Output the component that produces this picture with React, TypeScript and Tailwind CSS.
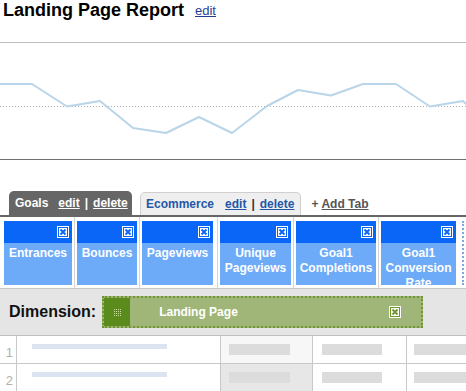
import React from 'react'

const FONT = "font-['Liberation_Sans',Arial,sans-serif]"

const METRICS = [
  { label: ['Entrances'], cell: 'w-[75px] pl-[4px] pr-[2px]' },
  { label: ['Bounces'], cell: 'w-[65px] px-[2px]' },
  { label: ['Pageviews'], cell: 'w-[78px] pl-[2px] pr-[4px]' },
  { label: ['Unique', 'Pageviews'], cell: 'w-[76px] pl-[2px] pr-[2px]' },
  { label: ['Goal1', 'Completions'], cell: 'w-[85px] px-[2px]' },
  { label: ['Goal1', 'Conversion', 'Rate'], cell: 'w-[79px] px-[2px] border-r-0' },
]

const POINTS = [
  [0, 44], [32, 44], [67, 66.5], [100, 61], [133, 88], [166, 93], [199, 77], [232, 93],
  [267, 66], [298, 50], [331, 55.5], [363, 44], [396, 44], [430, 66.5], [463, 61], [466, 64],
]

function CloseBox({ color }: { color: string }) {
  return (
    <svg width="12" height="12" viewBox="0 0 12 12">
      <rect x="0.5" y="0.5" width="11" height="11" fill="#fff" stroke="#fff" />
      <rect x="1.5" y="1.5" width="9" height="9" fill="#fff" stroke={color} strokeWidth="1" />
      <path d="M3.5 3.5 L8.5 8.5 M8.5 3.5 L3.5 8.5" stroke={color} strokeWidth="2" />
    </svg>
  )
}

function Chart() {
  return (
    <svg width="466" height="120" viewBox="0 0 466 120" className="block">
      <line x1="0" y1="2.5" x2="466" y2="2.5" stroke="#bdbdbd" />
      <line x1="0" y1="66.5" x2="466" y2="66.5" stroke="#b0b0b0" strokeDasharray="1 2" />
      <polyline
        points={POINTS.map((p) => p.join(',')).join(' ')}
        fill="none"
        stroke="#b9d5e9"
        strokeWidth="2"
        strokeLinejoin="round"
      />
      <line x1="0" y1="119.5" x2="466" y2="119.5" stroke="#6f6f6f" />
    </svg>
  )
}

function Row({ n, shade }: { n: number; shade: string }) {
  return (
    <div className="flex h-[28px] border-b border-[#c8c8c8]">
      <div className="w-[17px] border-r border-[#c8c8c8] pr-[3px] pt-[9px] text-right text-[13px] leading-[15px] text-[#b0b0b0]">
        {n}
      </div>
      <div className="w-[204px] border-r border-[#c8c8c8] pl-[15px] pt-[8px]">
        <div className="h-[5px] w-[135px] bg-[#dde4f1]" />
      </div>
      <div className={`w-[92px] border-r border-[#c8c8c8] pl-[8px] pt-[8px] ${shade}`}>
        <div className="h-[11px] w-[61px] bg-[#dcdcdc]" />
      </div>
      <div className="w-[94px] border-r border-[#c8c8c8] pl-[9px] pt-[8px]">
        <div className="h-[11px] w-[60px] bg-[#dcdcdc]" />
      </div>
      <div className="flex-1 pl-[7px] pt-[8px]">
        <div className="h-[11px] w-full bg-[#dcdcdc]" />
      </div>
    </div>
  )
}

export default function App() {
  return (
    <div className={`h-[391px] w-[466px] overflow-hidden bg-white ${FONT}`}>
      <div className="flex h-[40px] items-start pl-[3px]">
        <h1 className="text-[18px] font-bold leading-[21px] text-black">Landing Page Report</h1>
        <a href="#" className="ml-[11px] mt-[3px] text-[13px] leading-[15px] text-[#1f3f94] underline">
          edit
        </a>
      </div>

      <Chart />

      <div className="mt-[31px] flex h-[26px] items-end border-b-2 border-[#666] pl-[9px]">
        <div className="flex h-[24px] w-[123px] items-center rounded-t-[5px] bg-[#666] pl-[6px] text-[12px] font-bold text-white">
          <span>Goals</span>
          <a href="#" className="ml-[10px] underline">edit</a>
          <span className="ml-[5px]">|</span>
          <a href="#" className="ml-[5px] underline">delete</a>
        </div>
        <div className="ml-[8px] flex h-[23px] items-center rounded-t-[5px] border border-b-0 border-[#cfcfcf] bg-[#efefef] pl-[5px] pr-[6px] text-[12px] font-bold text-[#2457a8]">
          <span>Ecommerce</span>
          <a href="#" className="ml-[11px] underline">edit</a>
          <span className="ml-[5px] text-[#333]">|</span>
          <a href="#" className="ml-[5px] underline">delete</a>
        </div>
        <div className="ml-[10px] flex h-[23px] items-center text-[12px] font-bold text-[#555]">
          <span>+</span>
          <a href="#" className="ml-[3px] underline">Add Tab</a>
        </div>
      </div>

      <div className="flex h-[72px] border-b border-[#c8c8c8]">
        {METRICS.map((m) => (
          <div key={m.label.join(' ')} className={`border-r border-[#d4d4d4] pt-[4px] ${m.cell}`}>
            <div className="flex h-[22px] items-start justify-end bg-[#0a66f7] pr-[3px] pt-[5px]">
              <CloseBox color="#0a66f7" />
            </div>
            <div className="h-[42px] overflow-hidden bg-[#6dabf8] pt-[3px] text-center text-[12px] font-bold leading-[15px] text-white">
              {m.label.map((l) => (
                <div key={l}>{l}</div>
              ))}
            </div>
          </div>
        ))}
        <div className="ml-[4px] mt-[4px] h-[64px] border-l-2 border-dotted border-[#7fa8df]" />
      </div>

      <div className="flex h-[47px] items-center border-b border-[#c0c0c0] bg-[#e5e5e5] pl-[9px]">
        <span className="text-[16px] font-bold text-[#111]">Dimension:</span>
        <div className="ml-[6px] flex h-[32px] w-[321px] items-stretch border-2 border-dotted border-[#6f9530] bg-[#9fb678]">
          <div className="flex w-[26px] items-center justify-center bg-[#5c8b1d]">
            <div className="grid grid-cols-4 gap-[1px]">
              {Array.from({ length: 16 }).map((_, i) => (
                <div key={i} className="h-[1px] w-[1px] bg-[#c9dca0]" />
              ))}
            </div>
          </div>
          <div className="flex flex-1 items-center pl-[29px] pr-[20px] text-[12px] font-bold text-white">
            <span className="flex-1">Landing Page</span>
            <CloseBox color="#6f9530" />
          </div>
        </div>
      </div>

      <Row n={1} shade="bg-[#f7f7f7]" />
      <Row n={2} shade="bg-[#e7e7e7]" />
    </div>
  )
}
